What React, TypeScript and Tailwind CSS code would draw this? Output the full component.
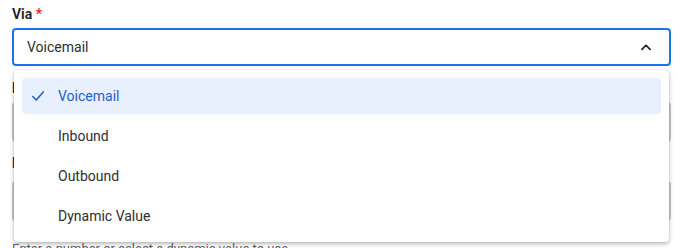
import React from "react";

const items = ["Voicemail", "Inbound", "Outbound", "Dynamic Value"];

export default function App() {
  return (
    <div className="relative w-[686px] h-[248px] overflow-hidden bg-white font-['Roboto',sans-serif] text-[14px]">
      <div className="pl-3 pr-[15px] pt-[4px]">
        <label className="block leading-5 font-semibold text-[#202124]">
          Via <span className="text-[#d93025]">*</span>
        </label>
        <div className="relative mt-1">
          <div className="h-[38px] rounded-[4px] border-2 border-[#1a73e8] flex items-center justify-between pl-[13px] pr-[16px] text-[#2d2f31]">
            <span>Voicemail</span>
            <svg width="14" height="14" viewBox="0 0 24 24" fill="none" stroke="#202124" strokeWidth="3" strokeLinecap="round" strokeLinejoin="round">
              <path d="M5 16 L12 9 L19 16" />
            </svg>
          </div>
          <div className="absolute left-[2px] right-[2px] top-[42px] z-10 rounded-[4px] bg-white p-2 shadow-[0_2px_4px_rgba(0,0,0,0.28),0_0_2px_rgba(0,0,0,0.1)] flex flex-col gap-1">
            {items.map((it, i) => (
              <div
                key={it}
                className={
                  i === 0
                    ? "h-9 rounded-[4px] bg-[#e8f0fe] flex items-center text-[#1a5fd0]"
                    : "h-9 rounded-[4px] flex items-center text-[#2d2f31]"
                }
              >
                <span className="w-[36px] flex justify-end pr-[13px]">
                  {i === 0 && (
                    <svg width="14" height="14" viewBox="0 0 24 24" fill="none" stroke="#1a5fd0" strokeWidth="2.6" strokeLinecap="round" strokeLinejoin="round">
                      <path d="M3 13 L9 19 L21 5" />
                    </svg>
                  )}
                </span>
                <span>{it}</span>
              </div>
            ))}
          </div>
        </div>
        <label className="block mt-3 leading-5 font-semibold text-[#202124]">Direction</label>
        <div className="mt-[4px] h-[40px] rounded-[4px] border-2 border-[#c4c7cc]" />
        <label className="block mt-[11px] leading-5 font-semibold text-[#202124]">Number</label>
        <div className="mt-[8px] h-[40px] rounded-[4px] border-2 border-[#c4c7cc]" />
        <p className="mt-[20px] leading-4 text-[13px] text-[#5f6368]">Enter a number or select a dynamic value to use</p>
      </div>
    </div>
  );
}
